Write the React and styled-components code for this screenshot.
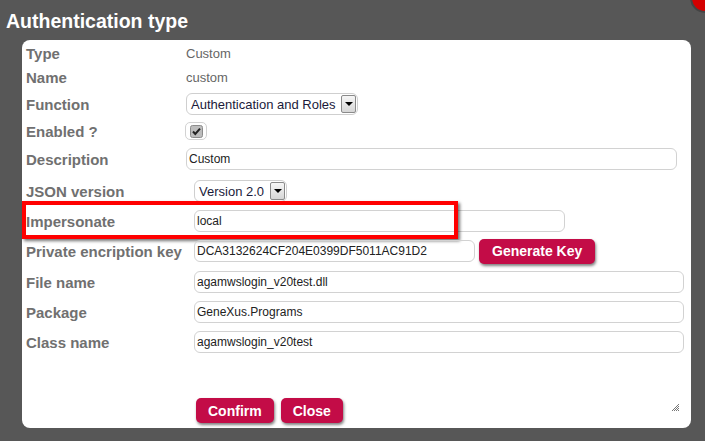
import React from "react";
import styled, { createGlobalStyle } from "styled-components";

const Global = createGlobalStyle`
  html, body {
    margin: 0;
    padding: 0;
    background: #575757;
    overflow: hidden;
  }
  body {
    font-family: "Liberation Sans", Arial, sans-serif;
  }
`;

const Page = styled.div`
  position: relative;
  width: 705px;
  height: 441px;
  overflow: hidden;
`;

const Title = styled.h1`
  margin: 0;
  height: 40px;
  padding: 2px 0 0 6px;
  box-sizing: border-box;
  line-height: 38px;
  font-size: 19.5px;
  font-weight: bold;
  color: #fff;
`;

const CloseDot = styled.div`
  position: absolute;
  top: -17px;
  right: -15px;
  width: 26px;
  height: 26px;
  border-radius: 50%;
  background: #d40000;
  border: 2px solid #444;
`;

const Panel = styled.div`
  position: relative;
  margin-left: 22px;
  width: 669px;
  height: 388px;
  box-sizing: border-box;
  padding-top: 1px;
  background: #fff;
  border-radius: 8px;
  display: flex;
  flex-direction: column;
`;

const Row = styled.div`
  position: relative;
  display: grid;
  grid-template-columns: ${(p) => p.$labelW}px 1fr;
  align-items: center;
  height: ${(p) => p.$h}px;
`;

const Label = styled.div`
  padding-left: 4px;
  font-size: 15px;
  font-weight: bold;
  color: #707070;
  white-space: nowrap;
`;

const Value = styled.div`
  font-size: 13px;
  color: #666;
`;

const Field = styled.div`
  display: flex;
  align-items: center;
  gap: 4px;
`;

const Input = styled.div`
  width: ${(p) => p.$w}px;
  height: 22px;
  box-sizing: border-box;
  border: 1px solid #d2d2d2;
  border-radius: 6px;
  padding: 0 2px;
  display: flex;
  align-items: center;
  font-size: 12px;
  color: #222;
  white-space: nowrap;
  overflow: hidden;
`;

const Select = styled.div`
  width: ${(p) => p.$w}px;
  height: 22px;
  box-sizing: border-box;
  border: 1px solid #cfcfcf;
  border-radius: 6px;
  display: flex;
  align-items: center;
  justify-content: space-between;
  padding-left: ${(p) => p.$pl}px;
  font-size: 13px;
  color: #1a1a3a;
`;

const Arrow = styled.div`
  width: 15px;
  height: 18px;
  box-sizing: border-box;
  border: 1px solid #8a8a8a;
  border-radius: 2px;
  background: linear-gradient(#f6f6f6, #d6d6d6);
  display: flex;
  align-items: center;
  justify-content: center;
  margin-right: 1px;
  &::after {
    content: "";
    border-left: 4px solid transparent;
    border-right: 4px solid transparent;
    border-top: 4px solid #000;
  }
`;

const CheckWrap = styled.div`
  width: 22px;
  height: 18px;
  box-sizing: border-box;
  border: 1px solid #d2d2d2;
  border-radius: 5px;
  display: flex;
  align-items: center;
  justify-content: center;
  margin-left: -1px;
`;

const Highlight = styled.div`
  position: absolute;
  left: 0;
  top: -6px;
  width: 436px;
  height: 38px;
  box-sizing: border-box;
  border: 4px solid #f00;
  box-shadow: 2px 2px 3px rgba(0, 0, 0, 0.55);
  pointer-events: none;
`;

const Button = styled.button`
  height: 25px;
  padding: 0 ${(p) => p.$px || 13}px;
  border: none;
  border-radius: 5px;
  background: #c30c47;
  color: #fff;
  font-family: "Liberation Sans", Arial, sans-serif;
  font-size: 14px;
  font-weight: bold;
  box-shadow: 1px 2px 3px rgba(0, 0, 0, 0.5);
  cursor: pointer;
`;

const Footer = styled.div`
  margin-top: auto;
  padding: 0 11px 5px 174px;
  display: flex;
  align-items: flex-end;
  justify-content: space-between;
`;

const Buttons = styled.div`
  display: flex;
  gap: 7px;
`;

const Grip = styled.svg`
  margin-bottom: 11px;
`;

const Checkbox = () => (
  <svg width="13" height="13" viewBox="0 0 13 13">
    <rect x="0.5" y="0.5" width="12" height="12" rx="2" fill="#bdbdbd" stroke="#8c8c8c" />
    <path d="M3 6.5 L5.3 9 L10 3.6" fill="none" stroke="#222" strokeWidth="2" />
  </svg>
);

const S1 = 164;
const S2 = 172;

export default function App() {
  return (
    <Page>
      <Global />
      <Title>Authentication type</Title>
      <CloseDot />
      <Panel>
        <Row $labelW={S1} $h={24}>
          <Label>Type</Label>
          <Value>Custom</Value>
        </Row>
        <Row $labelW={S1} $h={24}>
          <Label>Name</Label>
          <Value>custom</Value>
        </Row>
        <Row $labelW={S1} $h={30}>
          <Label>Function</Label>
          <Select $w={172} $pl={4}>
            Authentication and Roles
            <Arrow />
          </Select>
        </Row>
        <Row $labelW={S1} $h={24}>
          <Label>Enabled ?</Label>
          <CheckWrap>
            <Checkbox />
          </CheckWrap>
        </Row>
        <Row $labelW={S1} $h={32}>
          <Label>Description</Label>
          <Input $w={491}>Custom</Input>
        </Row>
        <Row $labelW={S2} $h={32}>
          <Label>JSON version</Label>
          <Select $w={93} $pl={4}>
            Version 2.0
            <Arrow />
          </Select>
        </Row>
        <Row $labelW={S2} $h={28}>
          <Highlight />
          <Label>Impersonate</Label>
          <Input $w={371}>local</Input>
        </Row>
        <Row $labelW={S2} $h={32}>
          <Label>Private encription key</Label>
          <Field>
            <Input $w={281}>DCA3132624CF204E0399DF5011AC91D2</Input>
            <Button>Generate Key</Button>
          </Field>
        </Row>
        <Row $labelW={S2} $h={30}>
          <Label>File name</Label>
          <Input $w={490}>agamwslogin_v20test.dll</Input>
        </Row>
        <Row $labelW={S2} $h={30}>
          <Label>Package</Label>
          <Input $w={490}>GeneXus.Programs</Input>
        </Row>
        <Row $labelW={S2} $h={30}>
          <Label>Class name</Label>
          <Input $w={490}>agamwslogin_v20test</Input>
        </Row>
        <Footer>
          <Buttons>
            <Button $px={12}>Confirm</Button>
            <Button $px={12}>Close</Button>
          </Buttons>
          <Grip width="9" height="9" viewBox="0 0 9 9">
            <path d="M8 1 L1 8 M8 3 L3 8 M8 5 L5 8 M8 7 L7 8" stroke="#777" strokeWidth="1" />
          </Grip>
        </Footer>
      </Panel>
    </Page>
  );
}
